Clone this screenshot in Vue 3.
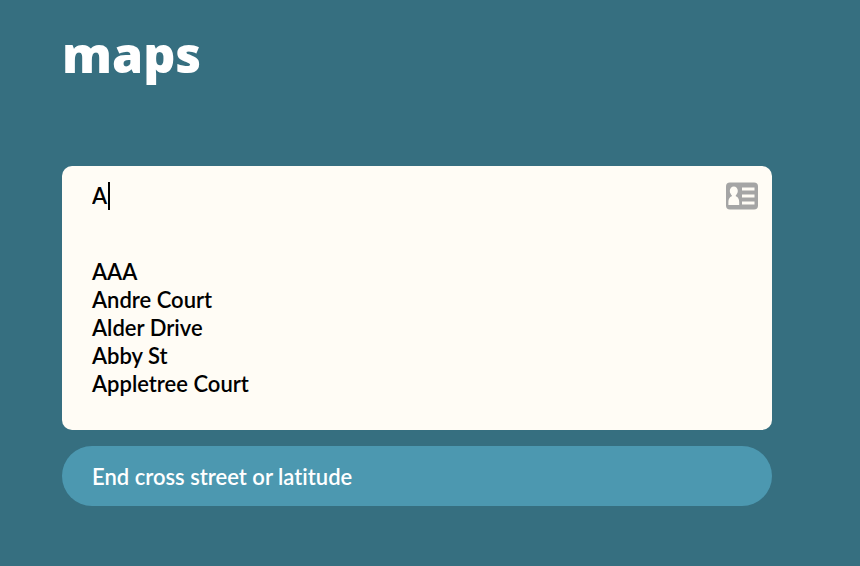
<script setup>
import { ref } from 'vue'

const start = ref('A')
const end = ref('')
const suggestions = ['AAA', 'Andre Court', 'Alder Drive', 'Abby St', 'Appletree Court']
</script>

<template>
  <main class="page">
    <h1 class="title">maps</h1>
    <form class="search" @submit.prevent>
      <section class="card">
        <div class="field">
          <input v-model="start" class="start" type="text" aria-label="Start cross street or latitude" autocomplete="off" />
          <span class="caret" aria-hidden="true"></span>
          <button class="contacts" type="button" aria-label="Contacts">
            <svg viewBox="0 0 32 28" width="32" height="28" aria-hidden="true">
              <rect y="0.5" width="32" height="27" rx="4" fill="#a5a5a5" />
              <g fill="#fffcf5">
                <ellipse cx="7.800" cy="9" rx="4" ry="4.500" />
                <path d="M5.800 12h4v2.200c2.400.8 3.400 3 3.400 5.800v3H2.400v-3c0-2.800 1-5 3.400-5.800z" />
                <rect x="16" y="5.500" width="12.500" height="3" />
                <rect x="16" y="12.500" width="12.500" height="3" />
                <rect x="16" y="19.500" width="12.500" height="3" />
              </g>
            </svg>
          </button>
        </div>
        <ul class="suggestions">
          <li v-for="name in suggestions" :key="name">
            <button class="suggestion" type="button" @click="start = name">{{ name }}</button>
          </li>
        </ul>
      </section>
      <input v-model="end" class="end" type="text" aria-label="End cross street or latitude" placeholder="End cross street or latitude" />
    </form>
  </main>
</template>

<style>
body {
  background: #366f80;
}
</style>

<style scoped>
.page {
  box-sizing: border-box;
  padding: 18px 88px 60px 62px;
  font-family: Futura, Lato, sans-serif;
  font-size: 22px;
  font-weight: 600;
  font-variant-ligatures: none;
  line-height: 28px;
}

.title {
  margin: 0 0 76px;
  color: #fff;
  font-family: Futura, "Open Sans", sans-serif;
  font-size: 50px;
  font-weight: 800;
  line-height: 72px;
}

.search {
  display: flex;
  flex-direction: column;
  gap: 16px;
}

.card {
  padding: 16px 14px 32px 30px;
  border-radius: 10px;
  background: #fffcf5;
  color: #000;
}

.field {
  display: flex;
  align-items: center;
}

.start {
  field-sizing: content;
  min-width: 16px;
  height: 28px;
  padding: 0;
  border: 0;
  outline: 0;
  background: none;
  color: inherit;
  font: inherit;
  caret-color: transparent;
}

.caret {
  width: 2px;
  height: 28px;
  background: #000;
}

.contacts {
  display: flex;
  margin-left: auto;
  padding: 0;
  border: 0;
  background: none;
  cursor: pointer;
}

.suggestions {
  margin: 48px 0 0;
  padding: 0;
  list-style: none;
}

.suggestion {
  display: block;
  padding: 0;
  border: 0;
  background: none;
  color: inherit;
  font: inherit;
  cursor: pointer;
}

.end {
  box-sizing: border-box;
  width: 100%;
  height: 60px;
  padding: 0 30px;
  border: 0;
  border-radius: 30px;
  outline: 0;
  background: #4c98b0;
  color: #fff;
  font: inherit;
  font-variant-ligatures: none;
}

.end::placeholder {
  color: #fff;
  opacity: 1;
}
</style>
